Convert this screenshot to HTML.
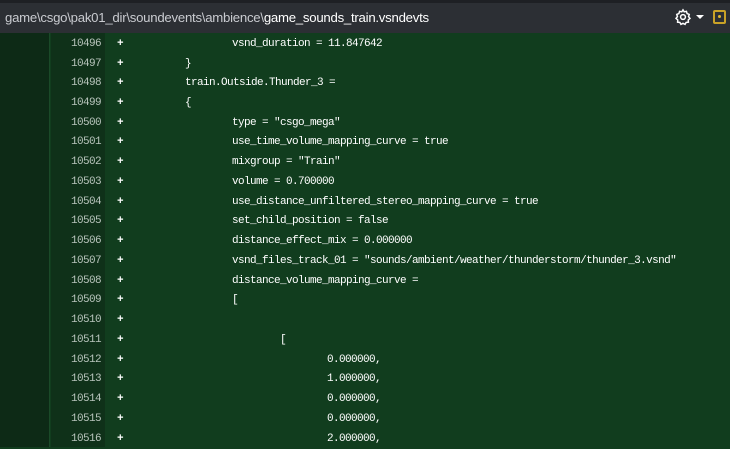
<!DOCTYPE html>
<html><head><meta charset="utf-8"><style>
*{margin:0;padding:0;box-sizing:border-box}
body{width:730px;height:447px;overflow:hidden;background:#113d1e;position:relative;font-family:"Liberation Mono",monospace}
.top{position:absolute;left:0;top:0;width:730px;height:3px;background:#1e2024}
.hdr{position:absolute;left:0;top:3px;width:730px;height:30px;background:#2c2f34;color:#c9cbd0;font-family:"Liberation Sans",sans-serif;font-size:13.2px;line-height:30px;padding-left:5px;white-space:nowrap;letter-spacing:-0.25px}
.hdr b{color:#fff;font-weight:normal}
.gut{position:absolute;left:0;top:33px;width:50px;height:414px;background:#0d2a16;border-right:1px solid #1a4a28}
.num{position:absolute;left:51px;top:33px;width:54px;height:414px;background:#0f3119}
.ln{position:absolute;left:0;width:730px;height:20px;font-size:11px;letter-spacing:-0.6px;line-height:20px;color:#fff;white-space:pre}
.ln .n{position:absolute;left:51px;width:50px;text-align:right;color:#b8c4bc}
.ln .p{position:absolute;left:117px;font-weight:bold}
.ln .c{position:absolute}
</style></head><body>
<div class="top"></div>
<div class="hdr">game\csgo\pak01_dir\soundevents\ambience\<b>game_sounds_train.vsndevts</b></div>
<svg style="position:absolute;left:674px;top:8px" width="18" height="18" viewBox="0 0 24 24" fill="none" stroke="#fff" stroke-width="2"><circle cx="12" cy="12" r="3.2"/><path d="M12 2.5l1.6 2.6 3-.6.9 2.9 2.8 1.2-.9 2.9 1.9 2.4-2.3 2 .2 3-3 .3-1.5 2.6-2.7-1.3-2.7 1.3-1.5-2.6-3-.3.2-3-2.3-2 1.9-2.4-.9-2.9 2.8-1.2.9-2.9 3 .6z"/></svg>
<div style="position:absolute;left:696px;top:15px;width:0;height:0;border-left:4px solid transparent;border-right:4px solid transparent;border-top:4px solid #fff"></div>
<div style="position:absolute;left:713px;top:10px;width:13px;height:14px;border:2px solid #c9a227;border-radius:2px"></div>
<div style="position:absolute;left:718px;top:15px;width:3px;height:3px;background:#e0b830;border-radius:50%"></div>
<div class="gut"></div><div class="num"></div>
<div class="ln" style="top:34px"><span class="n">10496</span><span class="p">+</span><span class="c" style="left:232px">vsnd_duration = 11.847642</span></div>
<div class="ln" style="top:54px"><span class="n">10497</span><span class="p">+</span><span class="c" style="left:185px">}</span></div>
<div class="ln" style="top:73px"><span class="n">10498</span><span class="p">+</span><span class="c" style="left:185px">train.Outside.Thunder_3 =</span></div>
<div class="ln" style="top:93px"><span class="n">10499</span><span class="p">+</span><span class="c" style="left:185px">{</span></div>
<div class="ln" style="top:113px"><span class="n">10500</span><span class="p">+</span><span class="c" style="left:232px">type = "csgo_mega"</span></div>
<div class="ln" style="top:132px"><span class="n">10501</span><span class="p">+</span><span class="c" style="left:232px">use_time_volume_mapping_curve = true</span></div>
<div class="ln" style="top:152px"><span class="n">10502</span><span class="p">+</span><span class="c" style="left:232px">mixgroup = "Train"</span></div>
<div class="ln" style="top:172px"><span class="n">10503</span><span class="p">+</span><span class="c" style="left:232px">volume = 0.700000</span></div>
<div class="ln" style="top:192px"><span class="n">10504</span><span class="p">+</span><span class="c" style="left:232px">use_distance_unfiltered_stereo_mapping_curve = true</span></div>
<div class="ln" style="top:211px"><span class="n">10505</span><span class="p">+</span><span class="c" style="left:232px">set_child_position = false</span></div>
<div class="ln" style="top:231px"><span class="n">10506</span><span class="p">+</span><span class="c" style="left:232px">distance_effect_mix = 0.000000</span></div>
<div class="ln" style="top:251px"><span class="n">10507</span><span class="p">+</span><span class="c" style="left:232px">vsnd_files_track_01 = "sounds/ambient/weather/thunderstorm/thunder_3.vsnd"</span></div>
<div class="ln" style="top:271px"><span class="n">10508</span><span class="p">+</span><span class="c" style="left:232px">distance_volume_mapping_curve =</span></div>
<div class="ln" style="top:290px"><span class="n">10509</span><span class="p">+</span><span class="c" style="left:232px">[</span></div>
<div class="ln" style="top:310px"><span class="n">10510</span><span class="p">+</span></div>
<div class="ln" style="top:330px"><span class="n">10511</span><span class="p">+</span><span class="c" style="left:280px">[</span></div>
<div class="ln" style="top:350px"><span class="n">10512</span><span class="p">+</span><span class="c" style="left:327px">0.000000,</span></div>
<div class="ln" style="top:369px"><span class="n">10513</span><span class="p">+</span><span class="c" style="left:327px">1.000000,</span></div>
<div class="ln" style="top:389px"><span class="n">10514</span><span class="p">+</span><span class="c" style="left:327px">0.000000,</span></div>
<div class="ln" style="top:409px"><span class="n">10515</span><span class="p">+</span><span class="c" style="left:327px">0.000000,</span></div>
<div class="ln" style="top:429px"><span class="n">10516</span><span class="p">+</span><span class="c" style="left:327px">2.000000,</span></div>
</body></html>
